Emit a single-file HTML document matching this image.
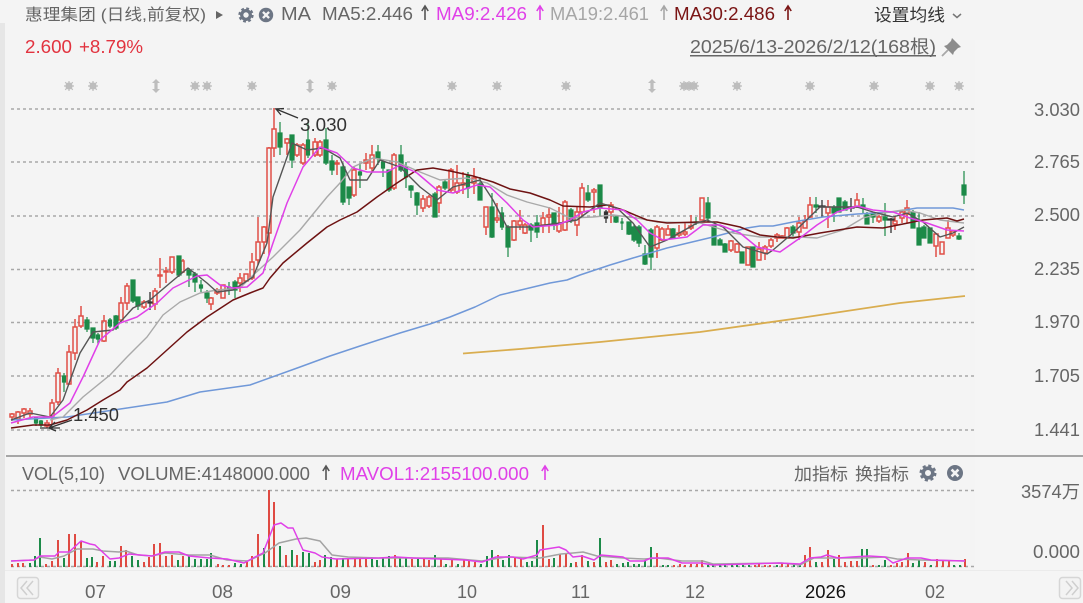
<!DOCTYPE html>
<html><head><meta charset="utf-8"><title>惠理集团</title>
<style>
html,body{margin:0;padding:0;background:#f4f4f4}
svg{display:block;position:absolute;left:0;top:0}
text{font-family:"Liberation Sans","Noto Sans CJK SC",sans-serif;fill:#666}
</style></head><body>
<svg width="1083" height="603" viewBox="0 0 1083 603" xmlns="http://www.w3.org/2000/svg">
<defs>
<g id="st"><circle r="3.6" fill="#bdbdbd"/><path d="M-5 0H5M0-5V5M-3.8-3.8L3.8 3.8M-3.8 3.8L3.8-3.8" stroke="#bdbdbd" stroke-width="1.2"/></g>
<g id="ud"><path d="M0-7L4-3H1.6V3H4L0 7L-4 3H-1.6V-3H-4Z" fill="#bdbdbd"/></g>
<g id="gr"><circle r="4.8" fill="none" stroke="#6d7685" stroke-width="3.6"/><circle r="7" fill="none" stroke="#6d7685" stroke-width="3" stroke-dasharray="3 2.5"/></g>
<g id="xc"><circle r="8" fill="#6d7685"/><path d="M-3.4-3.4L3.4 3.4M-3.4 3.4L3.4-3.4" stroke="#f4f4f4" stroke-width="2.6"/></g>
<path id="ar" d="M0 14V1M-3.2 5L0 0L3.2 5" fill="none" stroke-width="1.6"/>
</defs>
<rect width="1083" height="603" fill="#f4f4f4"/>
<rect x="975" y="40" width="108" height="530" fill="#f5f5f5"/>
<rect x="0" y="23" width="5" height="580" fill="#e6e6e6"/>
<rect x="5" y="570" width="1078" height="33" fill="#f5f5f5"/>
<rect x="5" y="570" width="1078" height="1" fill="#ebebeb"/>
<rect x="6" y="455" width="1077" height="2" fill="#a6a6a6"/>

<!-- grid -->
<path d="M11 109H975M11 162H975M11 216H975M11 269.500H975M11 322.500H975M11 376H975M11 430H975M11 490.500H975M11 566.500H975" stroke="#a8a8a8" stroke-width="1.500" stroke-dasharray="3 3" fill="none"/>

<!-- header -->
<text x="25" y="20" font-size="16" textLength="181" lengthAdjust="spacingAndGlyphs">惠理集团 (日线,前复权)</text>
<path d="M216 11l7 4-7 4z" fill="#666"/>
<use href="#gr" x="246" y="15" transform="translate(24.6 1.500) scale(.9)"/>
<use href="#xc" x="266" y="15" transform="translate(26.6 1.500) scale(.9)"/>
<text x="281" y="20" font-size="18" textLength="30" lengthAdjust="spacingAndGlyphs">MA</text>
<text x="322" y="20" font-size="18" textLength="91" lengthAdjust="spacingAndGlyphs">MA5:2.446</text>
<use href="#ar" x="425" y="6" stroke="#555"/>
<text x="436" y="20" font-size="18" textLength="91" lengthAdjust="spacingAndGlyphs" style="fill:#e040e8">MA9:2.426</text>
<use href="#ar" x="540" y="6" stroke="#e040e8"/>
<text x="550" y="20" font-size="18" textLength="99" lengthAdjust="spacingAndGlyphs" style="fill:#a6a6a6">MA19:2.461</text>
<use href="#ar" x="664" y="6" stroke="#a6a6a6"/>
<text x="674" y="20" font-size="18" textLength="101" lengthAdjust="spacingAndGlyphs" style="fill:#7a1414">MA30:2.486</text>
<use href="#ar" x="788" y="6" stroke="#7a1414"/>
<text x="874" y="21" font-size="17" textLength="71" lengthAdjust="spacingAndGlyphs" style="fill:#333">设置均线</text>
<path d="M953 14l4 3.500 4-3.500" fill="none" stroke="#777" stroke-width="1.500"/>
<text x="25" y="53" font-size="18" textLength="47" lengthAdjust="spacingAndGlyphs" style="fill:#e2333f">2.600</text>
<text x="79" y="53" font-size="18" textLength="64" lengthAdjust="spacingAndGlyphs" style="fill:#e2333f">+8.79%</text>
<text x="690" y="53" font-size="18" textLength="246" lengthAdjust="spacingAndGlyphs">2025/6/13-2026/2/12(168根)</text>
<rect x="690" y="55" width="246" height="1.500" fill="#666"/>
<path d="M952 38L961 47L958 48L954 52L953 55L944 46L947 45L951 41Z" fill="#8c8c8c"/>
<path d="M948 50L942 56" stroke="#a8a8a8" stroke-width="1.800" fill="none"/>

<!-- event markers -->
<use href="#st" x="69" y="86"/><use href="#st" x="93" y="86"/><use href="#ud" x="156" y="86"/><use href="#st" x="195" y="86"/><use href="#st" x="207" y="86"/><use href="#st" x="252" y="86"/><use href="#ud" x="310" y="86"/><use href="#st" x="332" y="86"/><use href="#st" x="452" y="86"/><use href="#st" x="497" y="86"/><use href="#st" x="566" y="86"/><use href="#ud" x="652" y="86"/><use href="#st" x="684" y="86"/><use href="#st" x="689" y="86"/><use href="#st" x="694" y="86"/><use href="#st" x="737" y="86"/><use href="#st" x="810" y="86"/><use href="#st" x="874" y="86"/><use href="#st" x="930" y="86"/><use href="#st" x="959" y="86"/>

<!-- red candles -->
<path fill="none" stroke="#e04f46" stroke-width="1.500" d="M12 413V414M12 417V421M10 414h4v3h-4zM18 411V412M18 419V424M16 412h4v7h-4zM24 408V409M24 413V418M22 409h4v4h-4zM30 408V411M30 414V418M28 411h4v3h-4zM47 420V423M47 426V428M45 423h4v3h-4zM52 399V403M52 416V425M50 403h4v13h-4zM58 368V373M58 402V405M56 373h4v29h-4zM69 345V352M69 384V385M67 352h4v32h-4zM75 319V327M75 353V360M73 327h4v26h-4zM81 306V316M81 326V328M79 316h4v10h-4zM104 315V321M104 341V342M102 321h4v20h-4zM121 297V303M121 320V323M119 303h4v17h-4zM127 283V286M127 303V310M125 286h4v17h-4zM144 300V302M144 307V309M142 302h4v5h-4zM155 288V291M155 304V310M153 291h4v13h-4zM160 258V275M160 276V288M158 275h4v1h-4zM166 267V271M166 272V283M164 271h4v1h-4zM172 257V257M172 272V274M170 257h4v15h-4zM183 259V261M183 272V273M181 261h3v11h-3zM211 297V298M211 304V310M209 298h4v6h-4zM217 288V290M217 293V295M215 290h4v3h-4zM223 285V285M223 298V298M221 285h4v13h-4zM240 273V278M240 283V292M238 278h4v5h-4zM246 274V274M246 281V281M244 274h4v7h-4zM252 253V262M252 278V280M250 262h4v16h-4zM258 217V242M258 260V265M256 242h4v18h-4zM264 226V227M264 242V254M262 227h4v15h-4zM269 147V148M269 233V255M267 148h4v85h-4zM274 108V129M274 148V157M272 129h4v19h-4zM287 138V139M287 143V155M285 139h4v4h-4zM297 143V145M297 155V157M295 145h4v10h-4zM303 143V145M303 163V165M301 145h4v18h-4zM315 138V142M315 155V157M313 142h4v13h-4zM320 140V142M320 155V157M318 142h4v13h-4zM337 160V163M337 164V175M335 163h4v1h-4zM354 167V170M354 195V197M352 170h4v25h-4zM366 153V160M366 163V170M364 160h4v3h-4zM372 145V155M372 168V172M370 155h4v13h-4zM394 153V155M394 188V190M392 155h4v33h-4zM423 195V199M423 208V212M421 199h4v9h-4zM429 195V197M429 206V208M427 197h4v9h-4zM439 185V187M439 203V213M437 187h4v16h-4zM451 168V170M451 190V192M449 170h4v20h-4zM457 165V183M457 192V194M455 183h4v9h-4zM463 172V183M463 185V194M461 183h4v2h-4zM474 168V178M474 183V194M472 178h4v5h-4zM486 207V207M486 227V235M484 207h4v20h-4zM497 203V218M497 220V223M495 218h4v2h-4zM514 220V221M514 240V241M512 221h4v19h-4zM520 210V221M520 225V230M518 221h4v4h-4zM525 223V225M525 233V234M523 225h4v8h-4zM543 212V218M543 225V233M541 218h4v7h-4zM549 207V215M549 217V233M547 215h4v2h-4zM559 207V224M559 231V233M557 224h4v7h-4zM565 200V202M565 230V231M563 202h4v28h-4zM577 207V212M577 225V236M575 212h4v13h-4zM582 183V188M582 212V218M580 188h4v24h-4zM594 188V190M594 192V213M592 190h4v2h-4zM611 202V205M611 212V223M609 205h4v7h-4zM657 225V227M657 248V258M655 227h4v21h-4zM662 227V229M662 240V241M660 229h4v11h-4zM668 225V229M668 235V235M666 229h4v6h-4zM679 225V233M679 235V237M677 233h4v2h-4zM685 223V232M685 234V236M683 232h4v2h-4zM691 215V226M691 228V230M689 226h4v2h-4zM702 198V198M702 220V220M700 198h4v22h-4zM731 240V241M731 250V252M729 241h4v9h-4zM737 243V244M737 252V253M735 244h4v8h-4zM748 247V247M748 265V265M746 247h4v18h-4zM759 242V249M759 260V260M757 249h4v11h-4zM765 245V247M765 253V260M763 247h4v6h-4zM771 238V240M771 246V248M769 240h4v6h-4zM777 233V235M777 238V242M775 235h4v3h-4zM782 235V236M782 238V238M780 236h4v2h-4zM787 227V228M787 238V238M785 228h4v10h-4zM799 217V223M799 232V240M797 223h4v9h-4zM805 215V221M805 228V228M803 221h4v7h-4zM810 197V205M810 217V218M808 205h4v12h-4zM828 200V207M828 213V228M826 207h4v6h-4zM857 193V200M857 207V208M855 200h4v7h-4zM879 215V217M879 221V223M877 217h4v4h-4zM895 217V221M895 224V230M893 221h4v3h-4zM902 210V212M902 218V223M900 212h4v6h-4zM907 200V208M907 214V223M905 208h4v6h-4zM936 233V234M936 246V257M934 234h4v12h-4zM942 242V242M942 254V254M940 242h4v12h-4zM948 220V228M948 238V238M946 228h4v10h-4zM953 230V231M953 235V237M951 231h4v4h-4z"/>

<!-- green candles -->
<path fill="#1c8a48" stroke="#1c8a48" stroke-width="1.200" d="M36 417V426M34.500 418h3v5h-3zM41 420V427M39.500 421h3v4h-3zM64 373V392M62.500 376h3v6h-3zM87 317V332M85 320h4v9h-4zM93 328V343M91 328h4v10h-4zM98 333V344M96.500 335h3v4h-3zM110 318V328M108.500 320h3v6h-3zM116 315V330M114 316h4v12h-4zM133 280V303M131 280h4v21h-4zM138 297V310M136 297h4v9h-4zM179 256V277M177 256h4v19h-4zM189 268V287M187 270h4v5h-4zM195 272V292M193 274h4v8h-4zM201 280V292M199.500 285h3v3h-3zM207 290V303M205 293h4v5h-4zM229 282V295M227.500 287h3v2h-3zM235 280V298M233 282h4v8h-4zM280 122V155M278 133h4v14h-4zM292 135V168M290 135h4v25h-4zM308 123V158M306.500 140h3v15h-3zM326 128V165M324 140h4v23h-4zM332 155V175M330 161h4v9h-4zM343 163V205M341 167h4v35h-4zM349 187V205M347 187h4v11h-4zM360 163V188M358.500 172h3v3h-3zM378 145V165M376 152h4v6h-4zM383 160V177M381.500 162h3v6h-3zM389 170V192M387 170h4v20h-4zM401 145V172M399 155h4v15h-4zM406 162V188M404.500 167h3v10h-3zM411 185V198M409 186h4v4h-4zM417 192V215M415 193h4v12h-4zM435 192V217M433 194h4v23h-4zM445 180V190M443 182h4v6h-4zM468 172V198M466.500 176h3v12h-3zM480 177V200M478 184h4v16h-4zM492 193V238M490 207h4v30h-4zM502 207V230M500.500 213h3v14h-3zM508 225V257M506 227h4v20h-4zM531 223V242M529 225h4v5h-4zM537 215V238M535 223h4v9h-4zM554 213V230M552 213h4v12h-4zM571 208V223M569 210h4v10h-4zM588 185V202M586 193h4v7h-4zM600 185V217M598 185h4v23h-4zM616 215V223M614 217h4v5h-4zM622 218V230M621 222h2v1h-2zM629 222V235M627 222h4v12h-4zM634 225V242M632 227h4v13h-4zM639 225V247M637 227h4v16h-4zM645 245V265M643 254h4v10h-4zM651 228V270M649 230h4v27h-4zM673 228V238M671 229h4v9h-4zM696 217V225M694 222h4v1h-4zM708 197V222M706 203h4v15h-4zM714 225V245M712 225h4v20h-4zM720 238V245M718 240h4v5h-4zM725 243V252M723 244h4v8h-4zM742 252V263M740 252h4v11h-4zM753 247V267M751 247h4v20h-4zM793 225V237M791 227h4v6h-4zM816 197V213M814 205h4v2h-4zM834 205V222M832 207h4v6h-4zM839 198V212M837 198h4v14h-4zM845 200V210M843 202h4v8h-4zM863 198V213M861 205h4v2h-4zM867 212V224M865 215h4v9h-4zM873 212V223M871 213h4v4h-4zM885 203V236M883 217h4v3h-4zM913 210V228M911 212h4v16h-4zM919 212V245M917 228h4v17h-4zM924 225V238M922 227h4v11h-4zM930 228V243M928 228h4v15h-4zM959 233V240M957 236h4v3h-4zM964 171V204M962 185h4v10h-4z"/>
<path fill="#333" stroke="#333" stroke-width="1.300" d="M150 292V310M148 302h4v1h-4zM606 210V223M604.500 212h3v6h-3zM822 200V217M819 206h6v1h-6zM851 198V212M848 207h6v1h-6zM891 218V233M888 219h6v1h-6z"/>

<!-- MA lines -->
<g fill="none" stroke-linejoin="round">
<polyline stroke="#d9ad4f" stroke-width="1.800" points="463,353.500 520,349 600,342 700,332 800,318 900,303 965,296"/>
<polyline stroke="#7098d8" stroke-width="1.500" points="11,420 67,417 127,408 167,402 200,392 250,385 300,367 330,356 360,346 400,333 430,324 450,317 475,307 500,295 525,289 550,283 567,280 580,275 610,265 633,258 667,248 713,237 747,228 760,226 773,226 793,222 823,217 857,214 893,212 917,208 953,208 964,210"/>
<polyline stroke="#a9a9a9" stroke-width="1.400" points="50,420 63,417 83,397 110,375 127,357 147,337 163,315 180,302 200,293 217,290 240,288 250,278 273,257 300,230 327,197 340,183 353,167 373,158 397,162 420,172 440,180 467,178 487,183 507,195 527,202 550,208 570,218 593,217 613,215 637,218 657,222 700,223 717,228 733,233 760,237 800,237 817,238 843,230 863,218 883,213 903,210 920,213 940,220 964,223"/>
<polyline stroke="#6e1212" stroke-width="1.500" points="11,428 33,425 50,425 67,420 87,410 103,400 120,390 127,382 147,368 167,350 187,332 207,317 233,300 250,293 263,288 270,278 283,263 307,243 327,227 340,220 357,212 377,197 397,183 417,170 433,168 450,171 473,176 493,182 510,189 530,193 550,200 563,206 590,207 607,205 623,210 647,220 667,223 700,222 717,222 740,227 760,235 777,237 793,238 820,233 857,227 883,228 903,224 923,220 947,218 957,221 964,219"/>
<polyline stroke="#555" stroke-width="1.400" points="11,420 30,413 50,417 63,400 80,353 93,332 113,330 133,308 150,300 170,283 188,268 207,283 217,292 233,290 253,277 267,243 273,197 292,143 307,150 323,148 340,158 350,180 367,180 380,160 400,167 420,187 437,200 453,187 480,180 493,200 507,227 530,227 560,223 577,220 600,203 617,208 633,223 650,247 667,240 697,223 707,220 723,227 743,247 767,254 773,250 793,233 820,207 857,207 873,212 893,217 907,213 923,222 940,237 953,233 964,227"/>
<polyline stroke="#e040e8" stroke-width="1.500" points="11,423 33,417 52,417 70,403 83,377 100,340 120,323 137,317 157,303 173,288 197,276 207,275 220,285 233,288 247,287 263,273 273,243 287,203 303,167 320,147 337,153 353,168 367,172 387,172 400,165 417,173 437,190 453,193 477,185 490,187 507,203 523,220 533,227 557,225 570,220 583,212 600,208 623,210 637,220 650,233 663,240 687,237 703,225 720,225 740,233 757,247 780,252 800,238 817,225 837,212 857,206 873,210 893,212 910,218 927,223 947,230 964,231"/>
</g>
<!-- annotations -->
<path d="M298 118L276 109M284 108.500L276 109L281 115" fill="none" stroke="#333" stroke-width="1.300"/>
<text x="300" y="131" font-size="18" textLength="47" lengthAdjust="spacingAndGlyphs" style="fill:#333">3.030</text>
<path d="M72 420L49 428M40 428H60M55 422L49 428L56 431" fill="none" stroke="#333" stroke-width="1.300"/>
<text x="73" y="421" font-size="18" textLength="46" lengthAdjust="spacingAndGlyphs" style="fill:#333">1.450</text>

<!-- y axis -->
<g font-size="18">
<text x="1034" y="116" textLength="46" lengthAdjust="spacingAndGlyphs">3.030</text>
<text x="1034" y="168" textLength="46" lengthAdjust="spacingAndGlyphs">2.765</text>
<text x="1034" y="221" textLength="46" lengthAdjust="spacingAndGlyphs">2.500</text>
<text x="1034" y="275" textLength="46" lengthAdjust="spacingAndGlyphs">2.235</text>
<text x="1034" y="328" textLength="46" lengthAdjust="spacingAndGlyphs">1.970</text>
<text x="1034" y="382" textLength="46" lengthAdjust="spacingAndGlyphs">1.705</text>
<text x="1034" y="436" textLength="46" lengthAdjust="spacingAndGlyphs">1.441</text>
<text x="1021" y="498" textLength="59" lengthAdjust="spacingAndGlyphs">3574万</text>
<text x="1033" y="558" textLength="47" lengthAdjust="spacingAndGlyphs">0.000</text>
</g>

<!-- volume header -->
<text x="22" y="480" font-size="18" textLength="83" lengthAdjust="spacingAndGlyphs">VOL(5,10)</text>
<text x="118" y="480" font-size="18" textLength="192" lengthAdjust="spacingAndGlyphs">VOLUME:4148000.000</text>
<use href="#ar" x="326" y="466" stroke="#555"/>
<text x="340" y="480" font-size="18" textLength="189" lengthAdjust="spacingAndGlyphs" style="fill:#e040e8">MAVOL1:2155100.000</text>
<use href="#ar" x="545" y="466" stroke="#e040e8"/>
<text x="794" y="480" font-size="17" textLength="54" lengthAdjust="spacingAndGlyphs">加指标</text>
<text x="855" y="480" font-size="17" textLength="54" lengthAdjust="spacingAndGlyphs">换指标</text>
<use href="#gr" x="928" y="473"/>
<use href="#xc" x="955" y="473"/>

<!-- volume bars -->
<path fill="none" stroke="#df4a42" stroke-width="2" d="M12 567v-3M18 567v-4M23 567v-4M46 567v-3M52 567v-6M58 567v-27M69 567v-33M75 567v-33M81 567v-26M97 567v-5M103 567v-11M121 567v-21M126 567v-17M144 567v-5M149 567v-10M154 567v-23M160 567v-24M166 567v-11M172 567v-12M183 567v-11M218 567v-3M223 567v-2M229 567v-2M247 567v-5M252 567v-11M258 567v-33M269 567v-77M274 567v-65M286 567v-12M297 567v-12M315 567v-5M320 567v-7M337 567v-8M348 567v-9M355 567v-8M360 567v-8M366 567v-8M395 567v-12M412 567v-8M424 567v-8M429 567v-7M441 567v-8M452 567v-7M464 567v-7M469 567v-7M475 567v-5M498 567v-12M515 567v-9M521 567v-8M543 567v-42M549 567v-8M560 567v-13M566 567v-13M576 567v-5M582 567v-12M594 567v-5M606 567v-5M611 567v-7M657 567v-14M674 567v-2M680 567v-3M685 567v-2M691 567v-3M697 567v-3M702 567v-7M755 567v-2M759 567v-4M765 567v-2M770 567v-2M782 567v-4M788 567v-3M805 567v-12M810 567v-20M822 567v-5M828 567v-17M839 567v-12M845 567v-5M851 567v-6M857 567v-6M873 567v-2M891 567v-2M897 567v-4M902 567v-5M908 567v-14M925 567v-5M937 567v-8M943 567v-7M949 567v-6M965 567v-8"/>
<path fill="none" stroke="#1c8a48" stroke-width="2" d="M30 567v-4M35 567v-11M40 567v-29M64 567v-9M87 567v-9M92 567v-10M110 567v-6M115 567v-6M132 567v-11M138 567v-7M178 567v-7M189 567v-11M195 567v-8M201 567v-8M207 567v-8M211 567v-14M235 567v-4M241 567v-3M264 567v-19M280 567v-21M292 567v-17M303 567v-15M309 567v-14M325 567v-12M331 567v-10M343 567v-9M372 567v-8M377 567v-7M383 567v-9M389 567v-11M400 567v-10M406 567v-9M418 567v-8M435 567v-12M446 567v-3M458 567v-3M481 567v-3M487 567v-11M492 567v-17M503 567v-7M509 567v-12M527 567v-5M532 567v-6M537 567v-27M554 567v-9M571 567v-4M588 567v-6M600 567v-29M617 567v-3M623 567v-4M628 567v-5M634 567v-3M639 567v-3M645 567v-6M651 567v-20M663 567v-2M668 567v-2M708 567v-2M713 567v-2M720 567v-2M725 567v-2M732 567v-2M737 567v-2M743 567v-2M749 567v-2M777 567v-2M794 567v-3M800 567v-3M816 567v-5M834 567v-8M862 567v-18M867 567v-18M879 567v-2M885 567v-7M913 567v-4M919 567v-7M931 567v-2M954 567v-2M960 567v-2"/>
<g fill="none" stroke-linejoin="round">
<polyline stroke="#a3a3a3" stroke-width="1.500" points="11,561 34,560 40,557 52,559 64,556 77,549 93,549 103,551 119,552 126,551 138,555 152,556 165,553 189,555 210,555 227,560 248,561 265,553 279,543 296,539 306,538 320,541 332,555 348,557 379,558 448,558 482,561 506,557 540,558 561,554 573,553 583,552 597,556 623,558 644,559 658,558 682,561 703,561 713,564 782,563 800,565 814,558 834,558 862,558 886,557 897,559 921,560 965,561"/>
<polyline stroke="#e040e8" stroke-width="1.500" points="11,561 34,560 40,556 55,556 59,552 69,552 81,541 90,544 95,545 110,559 119,558 129,554 152,556 165,552 179,552 189,556 210,558 227,559 244,563 255,557 263,553 274,525 281,523 288,528 293,528 303,550 315,553 322,557 336,559 379,558 396,557 413,558 465,560 482,562 496,557 513,557 523,559 537,555 540,550 559,547 566,550 573,557 582,556 594,560 601,555 623,557 630,561 644,561 651,558 668,558 682,563 701,563 713,565 779,563 800,564 810,558 821,557 827,555 838,558 852,557 869,556 885,557 893,563 907,558 921,558 931,560 965,561"/>
</g>

<!-- x axis -->
<g font-size="18">
<text x="85" y="598" textLength="21" lengthAdjust="spacingAndGlyphs">07</text>
<text x="212" y="598" textLength="21" lengthAdjust="spacingAndGlyphs">08</text>
<text x="330" y="598" textLength="21" lengthAdjust="spacingAndGlyphs">09</text>
<text x="457" y="598" textLength="20" lengthAdjust="spacingAndGlyphs">10</text>
<text x="571" y="598" textLength="19" lengthAdjust="spacingAndGlyphs">11</text>
<text x="685" y="598" textLength="20" lengthAdjust="spacingAndGlyphs">12</text>
<text x="805" y="598" textLength="41" lengthAdjust="spacingAndGlyphs" style="fill:#111">2026</text>
<text x="925" y="598" textLength="20" lengthAdjust="spacingAndGlyphs">02</text>
</g>
<rect x="17.500" y="577.500" width="21" height="21" rx="3" fill="#f3f3f3" stroke="#d6d6d6" stroke-width="1.500"/>
<path d="M27 581l-6 7 6 7M33 581l-6 7 6 7" fill="none" stroke="#cfcfcf" stroke-width="1.500"/>
<rect x="1059.500" y="577.500" width="21" height="21" rx="3" fill="#f3f3f3" stroke="#d6d6d6" stroke-width="1.500"/>
<path d="M1066 581l6 7-6 7M1072 581l6 7-6 7" fill="none" stroke="#cfcfcf" stroke-width="1.500"/>
</svg>
</body></html>
